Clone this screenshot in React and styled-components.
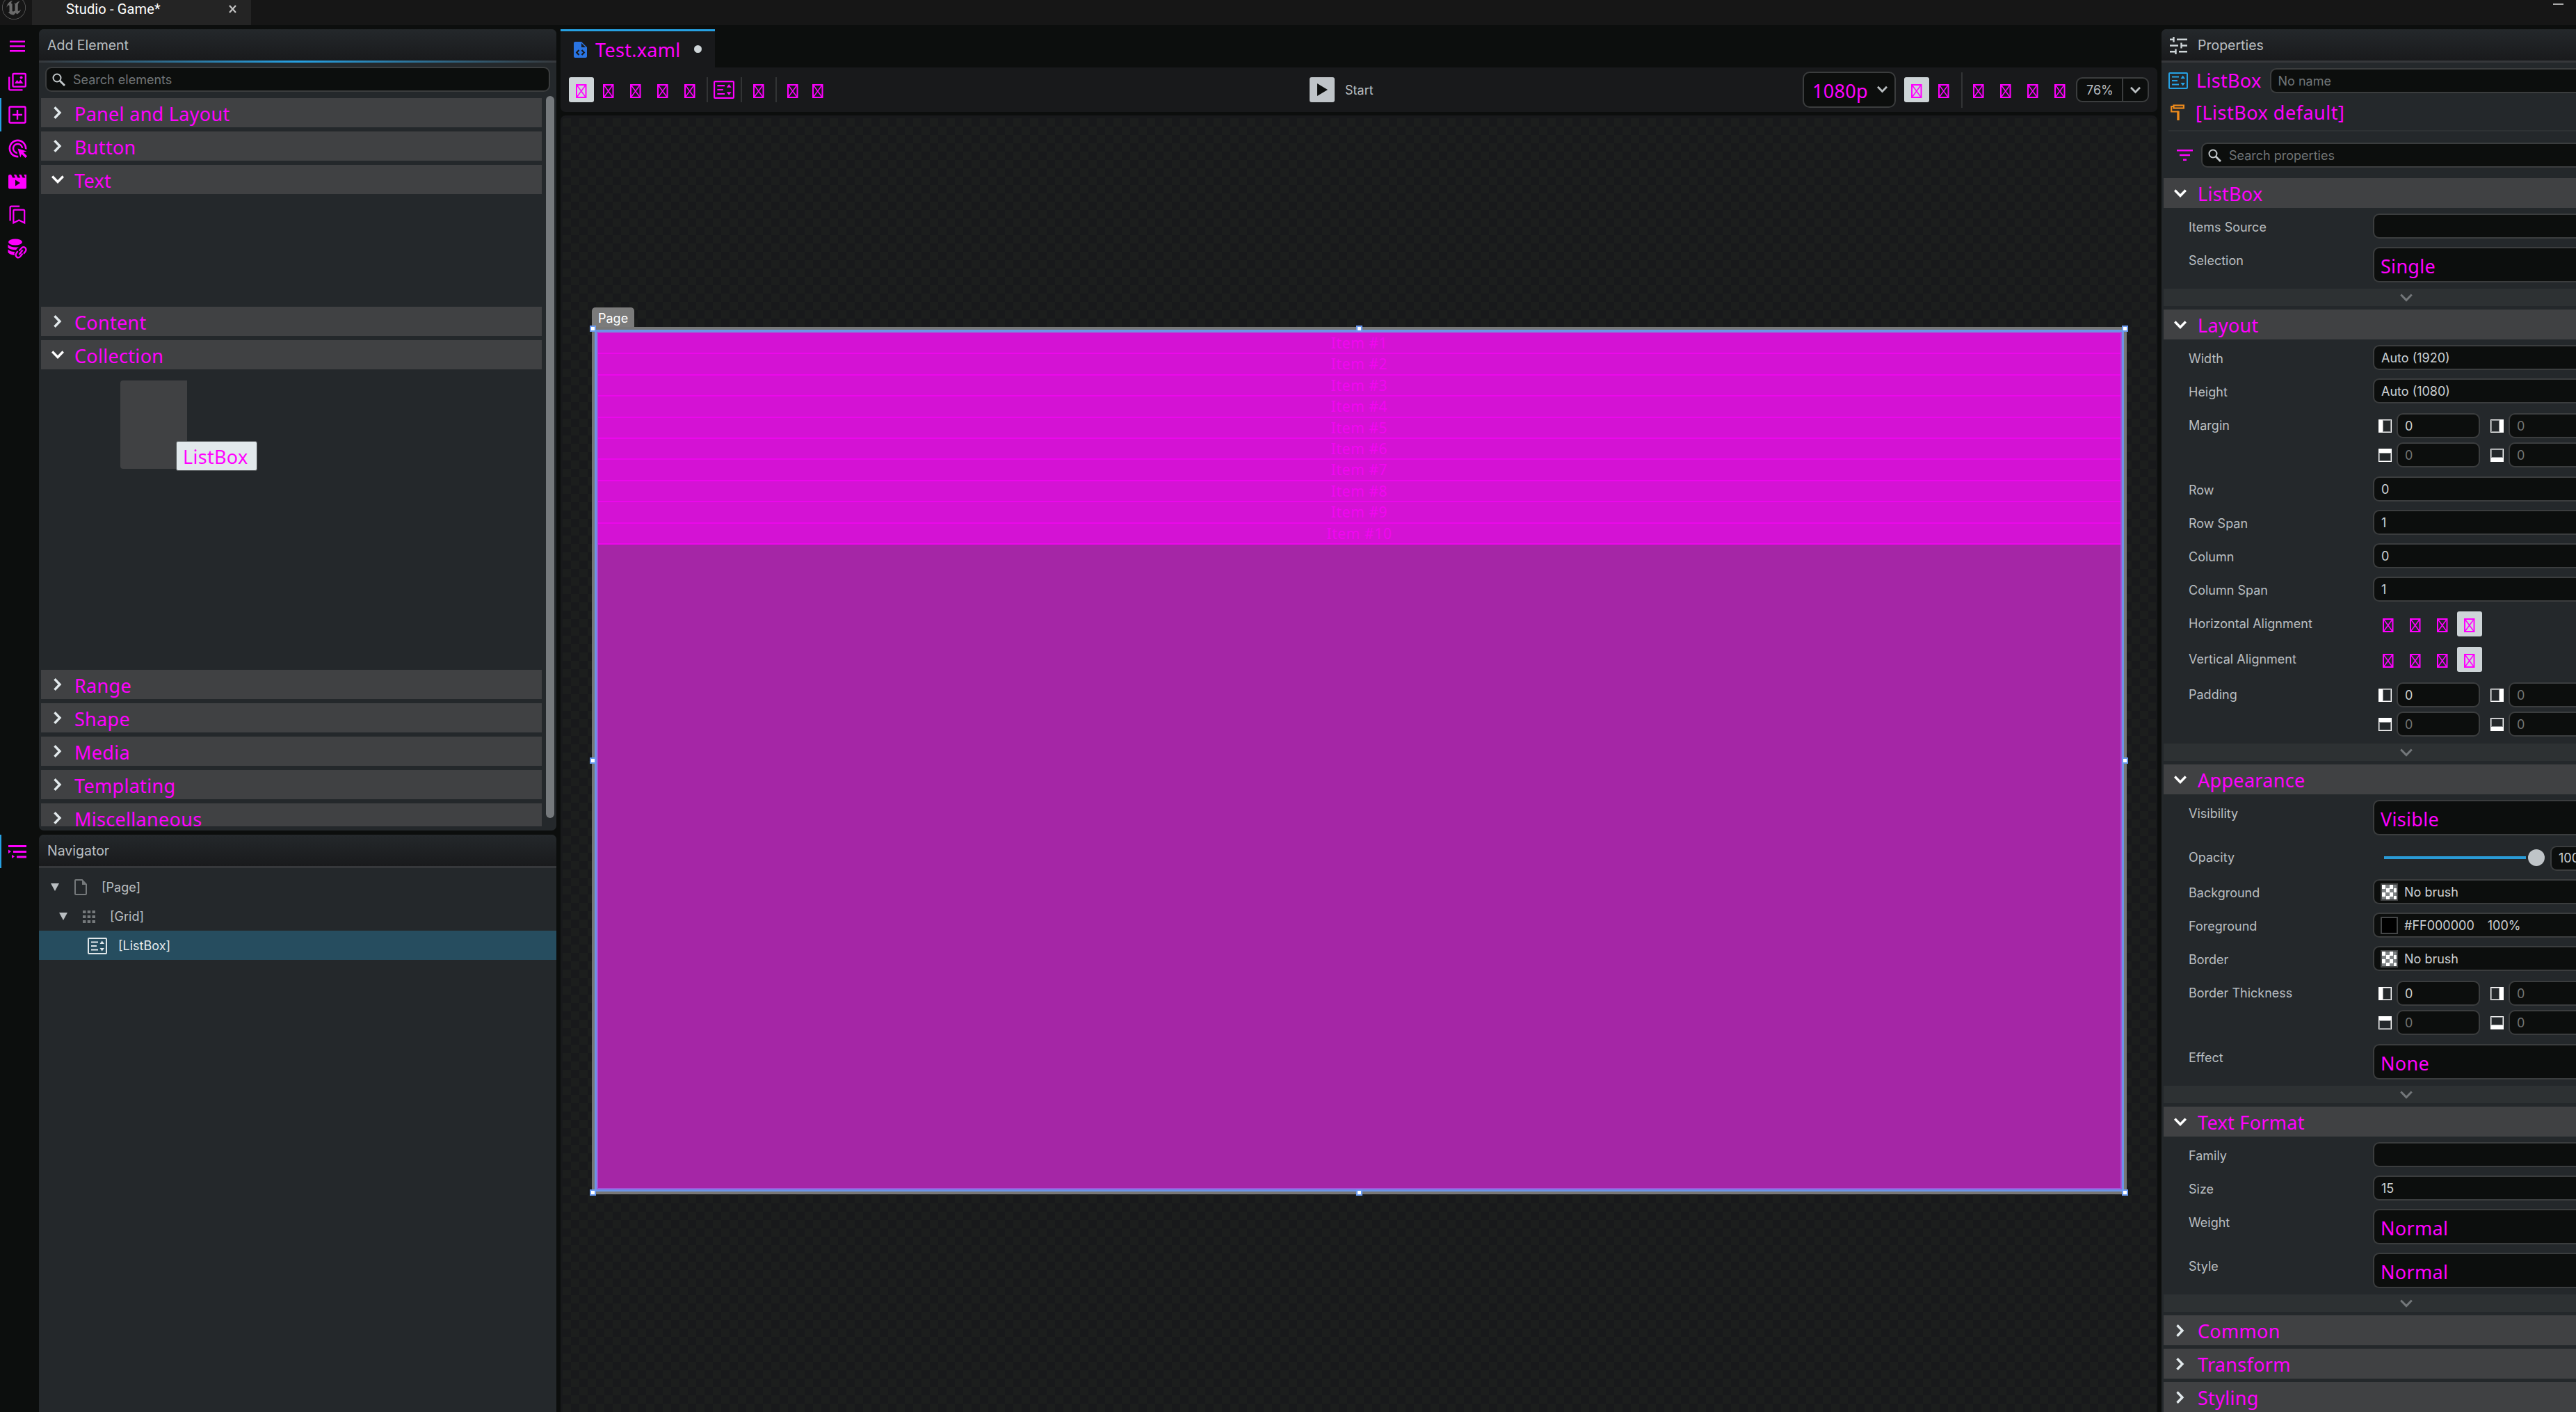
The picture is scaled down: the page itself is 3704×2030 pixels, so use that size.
import React from "react";
import styled, { createGlobalStyle, css } from "styled-components";
import { SiUnrealengine } from "react-icons/si";
import { MdAdsClick } from "react-icons/md";

const magenta = "#ff00ff";
const blue = "#26a1e3";

const GlobalStyle = createGlobalStyle`
  * {
    box-sizing: border-box;
  }
  body {
    margin: 0;
    background: #0c0e0d;
    overflow: hidden;
  }
`;

const Window = styled.div`
  width: 3704px;
  height: 2030px;
  display: flex;
  flex-direction: column;
  overflow: hidden;
  background: #0c0e0d;
  color: #b9bec1;
  font: 18px/24px Inter, sans-serif;
  white-space: nowrap;
`;

const TitleBar = styled.header`
  display: flex;
  height: 36px;
  background: #161616;
`;

const Logo = styled.div`
  width: 46px;
  padding-left: 3px;
  overflow: hidden;
  color: #6a6a6a;
  svg {
    display: block;
    margin-top: -6px;
  }
`;

const WindowTab = styled.div`
  display: flex;
  justify-content: space-between;
  width: 315px;
  padding: 1px 21px 0 49px;
  background: #242424;
  color: #fff;
  font: 20px/24px Roboto, sans-serif;
  letter-spacing: 0.15px;
`;

const CloseMark = styled.span`
  color: #c4c4c4;
  padding-top: 6px;
  svg {
    display: block;
  }
`;

const Minimize = styled.div`
  width: 15px;
  height: 2px;
  margin: 5px 18px 0 auto;
  background: #aaa;
`;

const Workspace = styled.div`
  display: flex;
  flex: 1;
  min-height: 0;
  padding-top: 6px;
`;

const Rail = styled.nav`
  display: flex;
  flex-direction: column;
  width: 56px;
  color: ${magenta};
`;

const RailItem = styled.div`
  display: flex;
  align-items: center;
  justify-content: center;
  height: 48px;
  margin-top: ${(p) => p.$gap || 0}px;
  padding-right: 9px;
  padding-left: 1px;
  border-left: 2px solid ${(p) => (p.$active ? blue : "transparent")};
`;

const LeftColumn = styled.div`
  display: flex;
  flex-direction: column;
  gap: 6px;
  width: 744px;
  margin-right: 6px;
`;

const Panel = styled.section`
  display: flex;
  flex-direction: column;
  height: ${(p) => (p.$height ? `${p.$height}px` : "auto")};
  flex: ${(p) => (p.$height ? "none" : 1)};
  min-height: 0;
  overflow: hidden;
  border-radius: ${(p) => p.$radius || "7px"};
  background: #24282b;
`;

const PanelHeader = styled.div`
  display: flex;
  flex: none;
  align-items: center;
  gap: 15px;
  height: 48px;
  padding: 1px 0 0 12px;
  border-bottom: 3px solid #36383b;
  background: linear-gradient(#24282b, #191a1c) padding-box;
  font-size: 19.5px;
  ${(p) =>
    p.$active &&
    css`
      border-image: linear-gradient(90deg, #36383b, ${blue}, #36383b) 1;
    `}
`;

const fieldLook = css`
  border: 2px solid #3b3d3e;
  background: #0c0e0d;
`;

const SearchBox = styled.div`
  ${fieldLook}
  display: flex;
  align-items: center;
  gap: 11px;
  height: 36px;
  margin: ${(p) => p.$margin || 0};
  padding: 1px 0 0 8px;
  border-radius: ${(p) => (p.$grow ? "9px 0 0 9px" : "9px")};
  border-right-width: ${(p) => (p.$grow ? 0 : "2px")};
  color: #717577;
  flex: ${(p) => (p.$grow ? 1 : "none")};
  svg {
    color: #c4c9cc;
  }
`;

const ElementList = styled.div`
  display: flex;
  flex: 1;
  min-height: 0;
  margin: 6px 3px 6px;
  gap: 6px;
`;

const Categories = styled.div`
  display: flex;
  flex-direction: column;
  gap: 6px;
  width: 720px;
  padding-top: 3px;
  overflow: hidden;
`;

const ScrollThumb = styled.div`
  width: 12px;
  height: 1038px;
  border-radius: 6px;
  background: #75797c;
`;

const bigText = css`
  color: ${magenta};
  font: 27px/36px "Noto Sans", sans-serif;
  letter-spacing: 0.3px;
`;

const SectionBar = styled.div`
  ${bigText}
  display: flex;
  flex: none;
  align-items: center;
  gap: ${(p) => p.$gap || 15}px;
  height: ${(p) => p.$height || 42}px;
  padding-left: 15px;
  background: #404143;
  svg {
    flex: none;
    color: ${(p) => (p.$open ? "#fff" : "#e2e9ec")};
  }
  span {
    padding-top: 3px;
  }
`;

const CategoryBody = styled.div`
  flex: none;
  height: ${(p) => p.$height}px;
  padding: 10px 0 0 114px;
`;

const ElementTile = styled.div`
  position: relative;
  width: 96px;
  height: 127px;
  border-radius: 4px 0 0 4px;
  background: #404143;
`;

const Tooltip = styled.div`
  ${bigText}
  position: absolute;
  left: 80px;
  top: 87px;
  height: 43px;
  width: 117px;
  padding: 4px 0 0 9px;
  border: 1px solid #54585a;
  border-radius: 3px;
  background: #e2e9ec;
`;

const Tree = styled.div`
  padding-top: 6px;
`;

const TreeRow = styled.div`
  display: flex;
  align-items: center;
  height: 42px;
  padding: 1px 0 0 ${(p) => p.$indent}px;
  color: ${(p) => (p.$selected ? "#e4eaed" : "#b9bec1")};
  background: ${(p) => (p.$selected ? "#264d5f" : "none")};
`;

const TreeIcon = styled.span`
  display: flex;
  justify-content: center;
  width: 30px;
  margin: 0 15px 0 16px;
  color: ${(p) => (p.$bright ? "#dfe6e9" : "#75797b")};
`;

const Editor = styled.main`
  display: flex;
  flex-direction: column;
  width: 2296px;
  margin-right: 6px;
`;

const FileTab = styled.div`
  ${bigText}
  display: flex;
  align-items: center;
  width: 222px;
  height: 55px;
  padding: 1px 0 0 19px;
  border-top: 3px solid ${blue};
  background: #18191b;
  gap: 12px;
`;

const ModifiedDot = styled.i`
  width: 11px;
  height: 11px;
  margin: -2px 0 0 7px;
  border-radius: 50%;
  background: #ced5d8;
`;

const Toolbar = styled.div`
  display: flex;
  align-items: center;
  height: 64px;
  padding: 0 12px;
  border-radius: 0 7px 7px 7px;
  background: #18191b;
`;

const ToolGroup = styled.div`
  display: flex;
  align-items: center;
  gap: 3px;
  flex: ${(p) => (p.$width ? `0 0 ${p.$width}px` : 1)};
  justify-content: ${(p) => p.$align || "flex-start"};
`;

const ToolButton = styled.span`
  display: flex;
  align-items: center;
  justify-content: center;
  width: 36px;
  height: 36px;
  margin-left: ${(p) => p.$shift || 0}px;
  padding-top: ${(p) => (p.$flat ? 0 : "4px")};
  border-radius: 3px;
  color: ${magenta};
  background: ${(p) => (p.$selected ? "#ced5d8" : "none")};
`;

const Separator = styled.i`
  width: 2px;
  height: ${(p) => p.$height || 36}px;
  margin: ${(p) => p.$margin || 0};
  background: #323435;
`;

const StartButton = styled.div`
  display: flex;
  align-items: center;
  justify-content: center;
  width: 36px;
  height: 36px;
  margin-right: 15px;
  border-radius: 3px;
  background: #bfc4c8;
`;

const StartLabel = styled.span`
  padding-top: 1px;
`;

const ResolutionBox = styled.div`
  ${fieldLook}
  ${bigText}
  display: flex;
  align-items: center;
  justify-content: space-between;
  width: 134px;
  height: 52px;
  margin-right: 9px;
  padding: 3px 10px 0 12px;
  border-radius: 10px;
  svg {
    margin-top: -4px;
    color: #b9bec1;
  }
`;

const ZoomBox = styled.div`
  ${fieldLook}
  display: flex;
  align-items: stretch;
  width: 105px;
  height: 36px;
  margin-left: 2px;
  border-radius: 9px;
  line-height: 33px;
`;

const ZoomValue = styled.span`
  width: 66px;
  padding-left: 13px;
  border-right: 2px solid #3b3d3e;
`;

const ZoomArrow = styled.span`
  display: flex;
  flex: 1;
  align-items: center;
  justify-content: center;
`;

const Canvas = styled.div`
  position: relative;
  flex: 1;
  margin-top: 5px;
  border: solid #18191b;
  border-width: 4px 2px 0 3px;
  border-radius: 7px 7px 0 0;
  background: conic-gradient(
      #18191b 25%,
      #1c1e1d 0 50%,
      #18191b 0 75%,
      #1c1e1d 0
    )
    0 0 / 24px 24px;
`;

const PageTag = styled.div`
  position: absolute;
  left: 42px;
  top: 272px;
  width: 61px;
  height: 28px;
  padding: 4px 0 0 9px;
  border-radius: 5px 5px 0 0;
  background: #7b7b7b;
  color: #fff;
`;

const Artboard = styled.div`
  position: absolute;
  left: 42px;
  top: 300px;
  width: 2207px;
  height: 1247px;
  border: 4px solid #777;
`;

const SelectionFrame = styled.div`
  height: 100%;
  border: 3px solid #6b95e6;
`;

const ListBoxView = styled.div`
  height: 100%;
  border: 2px solid #a255d8;
  background: #a526a6;
`;

const ListItem = styled.div`
  height: 30.4px;
  border-bottom: 2px solid #ec08ec;
  background: #d412d4;
  color: #f206f2;
  font: 21px/28px "Noto Sans", sans-serif;
  letter-spacing: 0.6px;
  text-align: center;
`;

const Handle = styled.i`
  position: absolute;
  left: ${(p) => p.$x}px;
  top: ${(p) => p.$y}px;
  width: 9px;
  height: 9px;
  border: 2px solid #6b9bf0;
  background: #fff;
`;

const Properties = styled.aside`
  display: flex;
  flex: 1;
  min-width: 0;
`;

const NameRow = styled.div`
  ${bigText}
  display: flex;
  flex: none;
  align-items: center;
  gap: 12px;
  height: 51px;
  padding-left: 10px;
`;

const TypeIcon = styled.span`
  display: flex;
  color: ${blue};
`;

const NameField = styled.div`
  ${fieldLook}
  flex: 1;
  height: 36px;
  padding-left: 10px;
  border-right: 0;
  border-radius: 9px 0 0 9px;
  color: #717577;
  font: 18px/33px Inter, sans-serif;
  letter-spacing: 0;
`;

const StyleRow = styled.div`
  ${bigText}
  display: flex;
  flex: none;
  align-items: center;
  gap: 16px;
  height: 48px;
  margin-left: 10px;
  padding: 0 0 5px 3px;
  border-bottom: 2px solid #2e3234;
  letter-spacing: 0.5px;
`;

const FilterRow = styled.div`
  display: flex;
  flex: none;
  align-items: center;
  gap: 12px;
  height: 36px;
  margin: 16px 0 15px;
  padding-left: 22px;
  color: ${magenta};
`;

const Section = styled.div`
  flex: none;
  margin: 0 0 5px 3px;
`;

const SectionRows = styled.div`
  display: flex;
  flex-direction: column;
  gap: 12px;
  padding: 8px 0 9px 36px;
`;

const MoreBar = styled.div`
  display: flex;
  align-items: center;
  height: 25px;
  padding-left: 340px;
  background: #2d3133;
  color: #73777a;
`;

const PropertyRow = styled.div`
  display: grid;
  grid-template-columns: 265px 1fr;
`;

const PropertyLabel = styled.label`
  height: 36px;
  padding-top: 8px;
`;

const Field = styled.div`
  ${fieldLook}
  display: flex;
  align-items: center;
  height: 36px;
  width: ${(p) => p.$width || "auto"};
  padding: 1px 0 0 10px;
  border-radius: ${(p) => (p.$width ? "9px" : "9px 0 0 9px")};
  border-right-width: ${(p) => (p.$width ? "2px" : 0)};
  color: ${(p) => (p.$dim ? "#717577" : "#ccd1d4")};
`;

const ComboField = styled.div`
  ${fieldLook}
  ${bigText}
  height: 51px;
  padding: 8px 0 0 9px;
  border-right: 0;
  border-radius: 9px 0 0 9px;
`;

const ThicknessGrid = styled.div`
  display: grid;
  grid-template-columns: 18px 120px 18px 120px;
  grid-template-rows: 36px 36px;
  align-items: center;
  gap: 6px 8px;
  padding: 2px 0 1px 8px;
  & > :nth-child(4n + 3) {
    margin-left: 7px;
  }
  & > :nth-child(4n) {
    margin-left: 7px;
  }
`;

const EdgeIcon = styled.i`
  width: 19px;
  height: 19px;
  border: 1px solid #fff;
  box-shadow: inset 0 0 0 1px #8e9193;
  border-${(p) => p.$edge}: 6px solid #fff;
`;

const AlignGroup = styled.div`
  display: flex;
  gap: 3px;
  height: 39px;
  padding: 2px 0 0 4px;
`;

const SliderRow = styled.div`
  display: flex;
  align-items: center;
  height: 39px;
  padding-left: 16px;
`;

const SliderTrack = styled.i`
  width: 204px;
  height: 4px;
  background: #2a9bd6;
`;

const SliderThumb = styled.i`
  width: 24px;
  height: 24px;
  margin: 0 8px 0 3px;
  border-radius: 50%;
  background: #bfc4c8;
`;

const SliderValue = styled(Field)`
  flex: 1;
  margin-top: 2px;
  overflow: hidden;
`;

const Swatch = styled.i`
  width: 25px;
  height: 25px;
  margin: -1px 9px 0 -1px;
  border: 2px solid #444647;
  background: ${(p) =>
    p.$color ||
    "conic-gradient(#808486 25%, #fff 0 50%, #808486 0 75%, #fff 0) 0 0 / 11px 11px"};
`;

const SwatchAlpha = styled.span`
  margin-left: 19px;
`;

// Box drawn for a glyph that the icon font does not have
const MissingGlyph = () => (
  <svg width="16" height="20" viewBox="0 0 16 20" fill="none" stroke="currentColor">
    <rect x="1" y="1" width="13.5" height="18" strokeWidth="2" />
    <path d="M1.5 1.5 14 18.5M14 1.5 1.5 18.5" strokeWidth="1.5" />
  </svg>
);

const Chevron = ({ dir, size = 18, width = 3.4 }) => (
  <svg width={size} height={size} viewBox="0 0 18 18" fill="none" stroke="currentColor" strokeWidth={width}>
    <path d={dir === "right" ? "M4.5 1.2 12 9l-7.5 7.8" : "M1.2 4.5 9 12.5l7.8-8"} />
  </svg>
);

const SearchIcon = () => (
  <svg width="19" height="19" viewBox="0 0 19 19" fill="none" stroke="currentColor" strokeWidth="2">
    <circle cx="7" cy="7" r="5.5" />
    <path d="m11 11 7 7" strokeWidth="2.8" />
  </svg>
);

const ListBoxIcon = ({ w = 28, h = 24 }) => (
  <svg
    width={w}
    height={h}
    viewBox="0 0 28 24"
    preserveAspectRatio="none"
    fill="none"
    stroke="currentColor"
    strokeWidth="2"
  >
    <rect x="1" y="1" width="26" height="22" rx="1" />
    <path d="M5 6.5h10M5 12h8M5 17.5h10" />
    <path d="m17.5 9 3.2-4.4L24 9zM17.5 15l3.2 4.4L24 15z" fill="currentColor" stroke="none" />
  </svg>
);

const MenuIcon = () => (
  <svg width="22" height="17" viewBox="0 0 22 17" fill="currentColor">
    <path d="M0 .5h22v2.6H0zM0 7.2h22v2.6H0zM0 13.9h22v2.6H0z" />
  </svg>
);

const ImagesIcon = () => (
  <svg width="26" height="27" viewBox="0 0 26 27" fill="none" stroke="currentColor" strokeWidth="2.3">
    <path d="M1.2 6.5V24q0 1.3 1.3 1.3h18" />
    <rect x="6.5" y="2" width="18.3" height="18.6" rx="1.2" />
    <path d="m9 16 3.5-5 2.5 3 2.3-3.5L21.5 16z" fill="currentColor" stroke="none" />
    <circle cx="18.6" cy="7.6" r="2" fill="currentColor" stroke="none" />
  </svg>
);

const AddBoxIcon = () => (
  <svg width="26" height="26" viewBox="0 0 26 26" fill="none" stroke="currentColor" strokeWidth="2.4">
    <rect x="1.5" y="1.5" width="23" height="23" rx="1.5" />
    <path d="M13 6v14M6 13h14" />
  </svg>
);

const ClapperIcon = () => (
  <svg width="26" height="21" viewBox="0 0 26 21" fill="currentColor" fillRule="evenodd">
    <path d="M2 0h2l2.3 4.5h3.8L7.8 0h3.4l2.3 4.5h3.8L15 0h3.4l2.3 4.5h3.7L22.2 0H26v18.6q0 2-2 2H2q-2 0-2-2V2q0-2 2-2zM10 7.5v9l7-4.5z" />
  </svg>
);

const BookmarksIcon = () => (
  <svg width="24" height="28" viewBox="0 0 24 28" fill="none" stroke="currentColor" strokeWidth="2.2">
    <path d="M1.6 22.5V3.2q0-1.6 1.6-1.6h12" />
    <path d="M6.4 25.5V8q0-1.4 1.4-1.4h13q1.4 0 1.4 1.4v17.5l-7.9-4z" />
  </svg>
);

const DataLinkIcon = () => (
  <svg width="28" height="29" viewBox="0 0 28 29" fill="currentColor">
    <ellipse cx="11" cy="5" rx="10" ry="4.5" />
    <path d="M.5 8.5q3.5 4 10.5 4 3 0 5-.6-2.5 2-4 4.3Q4 16.3 .5 13z" />
    <path d="M.5 15.5q3.5 3.5 9.7 3.5-1 2.5-.3 5Q3.5 23.5 .5 20z" />
    <g fill="none" stroke="currentColor" strokeWidth="2.3">
      <path d="m16.5 17.5 4-4.500q3-2 5 .5 1.8 2.3 0 5l-2.5 3.2" />
      <path d="m21.5 21.5-3.5 4.5q-2.5 2.5-5 .5-2.5-2.3-.5-5.5l2-3" />
      <path d="m16.5 23 5-6.5" />
    </g>
  </svg>
);

const OutlineIcon = () => (
  <svg width="26" height="19" viewBox="0 0 26 19" fill="currentColor">
    <path d="M0 0h26v3H0zM7 8h19v3H7zM12 15.5h14v3H12zM0 6.5l4 2.800-4 2.800zM5 13.700l4 2.700-4 2.600z" />
  </svg>
);

const TriangleIcon = () => (
  <svg width="12" height="11" viewBox="0 0 12 11" fill="currentColor">
    <path d="M0 0h12L6 11z" />
  </svg>
);

const PageIcon = () => (
  <svg width="18" height="23" viewBox="0 0 18 23" fill="none" stroke="currentColor" strokeWidth="2">
    <path d="M1 2q0-1 1-1h9l6 6.5V21q0 1-1 1H2q-1 0-1-1z" />
    <path d="M11 1v7h6z" fill="currentColor" stroke="none" />
  </svg>
);

const GridIcon = () => (
  <svg width="18" height="18" viewBox="0 0 18 18" fill="currentColor">
    {[0, 7, 14].map((y) => (
      <path key={y} d={`M0 ${y}h4.5v4H0zM6.7 ${y}h4.5v4H6.7zM13.5 ${y}h4.5v4h-4.5z`} />
    ))}
  </svg>
);

const XamlIcon = () => (
  <svg width="19" height="23" viewBox="0 0 19 23">
    <path d="M0 2q0-2 2-2h9l8 8v13q0 2-2 2H2q-2 0-2-2z" fill="#2a74e2" />
    <path d="M11 2v6h6z" fill="#18191b" />
    <path
      d="m7.5 12-3.3 3.5L7.5 19M11.5 12l3.3 3.5-3.3 3.5"
      fill="none"
      stroke="#18191b"
      strokeWidth="2.2"
    />
  </svg>
);

const SlidersIcon = () => (
  <svg width="25" height="25" viewBox="0 0 25 25" fill="none" stroke="#ced5d8" strokeWidth="2.4">
    <path d="M0 3.8h6M10 3.8h15M5.5 0v7.5M0 12.5h12M16 12.5h9M16.5 8.5v8M0 21.2h9M13 21.2h12M8.5 17.5V25" />
  </svg>
);

const StyleIcon = () => (
  <svg width="20" height="23" viewBox="0 0 20 23" fill="none" stroke="#ee8b1c" strokeWidth="2.2">
    <rect x="4.5" y="1.5" width="14.5" height="4" />
    <path d="M4.5 3H1.2v7.5h10" />
    <path d="M11 9.5V23" strokeWidth="3.4" />
  </svg>
);

const FilterIcon = () => (
  <svg width="23" height="16" viewBox="0 0 23 16" fill="currentColor">
    <path d="M0 0h23v2.5H0zM4 6.8h15v2.5H4zM9 13.5h5V16H9z" />
  </svg>
);

const Category = ({ name, open, height }) => (
  <>
    <SectionBar $open={open}>
      <Chevron dir={open ? "down" : "right"} />
      <span>{name}</span>
    </SectionBar>
    {open && (
      <CategoryBody $height={height}>
        {name === "Collection" && (
          <ElementTile>
            <Tooltip>ListBox</Tooltip>
          </ElementTile>
        )}
      </CategoryBody>
    )}
  </>
);

const Thickness = () => (
  <ThicknessGrid>
    {["left", "right", "top", "bottom"].map((edge) => (
      <React.Fragment key={edge}>
        <EdgeIcon $edge={edge} />
        <Field $width="120px" $dim={edge !== "left"}>
          0
        </Field>
      </React.Fragment>
    ))}
  </ThicknessGrid>
);

const Alignment = () => (
  <AlignGroup>
    {[0, 1, 2, 3].map((i) => (
      <ToolButton key={i} $selected={i === 3}>
        <MissingGlyph />
      </ToolButton>
    ))}
  </AlignGroup>
);

const Brush = ({ value, color, alpha }) => (
  <Field>
    <Swatch $color={color} />
    {value}
    {alpha && <SwatchAlpha>{alpha}</SwatchAlpha>}
  </Field>
);

const Opacity = () => (
  <SliderRow>
    <SliderTrack />
    <SliderThumb />
    <SliderValue>100</SliderValue>
  </SliderRow>
);

const text = (value) => <Field>{value}</Field>;
const combo = (value) => <ComboField>{value}</ComboField>;

const sections = [
  {
    name: "ListBox",
    rows: [
      ["Items Source", text("")],
      ["Selection", combo("Single")],
    ],
  },
  {
    name: "Layout",
    rows: [
      ["Width", text("Auto (1920)")],
      ["Height", text("Auto (1080)")],
      ["Margin", <Thickness />],
      ["Row", text("0")],
      ["Row Span", text("1")],
      ["Column", text("0")],
      ["Column Span", text("1")],
      ["Horizontal Alignment", <Alignment />],
      ["Vertical Alignment", <Alignment />],
      ["Padding", <Thickness />],
    ],
  },
  {
    name: "Appearance",
    rows: [
      ["Visibility", combo("Visible")],
      ["Opacity", <Opacity />],
      ["Background", <Brush value="No brush" />],
      ["Foreground", <Brush value="#FF000000" color="#000" alpha="100%" />],
      ["Border", <Brush value="No brush" />],
      ["Border Thickness", <Thickness />],
      ["Effect", combo("None")],
    ],
  },
  {
    name: "Text Format",
    rows: [
      ["Family", text("")],
      ["Size", text("15")],
      ["Weight", combo("Normal")],
      ["Style", combo("Normal")],
    ],
  },
  { name: "Common" },
  { name: "Transform" },
  { name: "Styling" },
];

const PropertySection = ({ name, rows }) => (
  <Section>
    <SectionBar $height={43} $gap={16} $open={!!rows}>
      <Chevron dir={rows ? "down" : "right"} />
      <span>{name}</span>
    </SectionBar>
    {rows && (
      <>
        <SectionRows>
          {rows.map(([label, control]) => (
            <PropertyRow key={label}>
              <PropertyLabel>{label}</PropertyLabel>
              {control}
            </PropertyRow>
          ))}
        </SectionRows>
        <MoreBar>
          <Chevron width={3} />
        </MoreBar>
      </>
    )}
  </Section>
);

const handles = [
  [39, 298],
  [1141, 298],
  [2242, 298],
  [39, 919],
  [2242, 919],
  [39, 1540],
  [1141, 1540],
  [2242, 1540],
];

const App = () => (
  <Window>
    <GlobalStyle />
    <TitleBar>
      <Logo>
        <SiUnrealengine size={34} />
      </Logo>
      <WindowTab>
        Studio - Game*
        <CloseMark>
          <svg width="11" height="12" viewBox="0 0 11 12" stroke="currentColor" strokeWidth="2.2">
            <path d="M1 1l9 10M10 1 1 11" />
          </svg>
        </CloseMark>
      </WindowTab>
      <Minimize />
    </TitleBar>
    <Workspace>
      <Rail>
        <RailItem>
          <MenuIcon />
        </RailItem>
        <RailItem $gap={3}>
          <ImagesIcon />
        </RailItem>
        <RailItem $active>
          <AddBoxIcon />
        </RailItem>
        <RailItem>
          <MdAdsClick size={31} />
        </RailItem>
        <RailItem>
          <ClapperIcon />
        </RailItem>
        <RailItem>
          <BookmarksIcon />
        </RailItem>
        <RailItem>
          <DataLinkIcon />
        </RailItem>
        <RailItem $active $gap={819}>
          <OutlineIcon />
        </RailItem>
      </Rail>

      <LeftColumn>
        <Panel $height={1152}>
          <PanelHeader $active>Add Element</PanelHeader>
          <SearchBox $margin="6px 9px 0">
            <SearchIcon />
            Search elements
          </SearchBox>
          <ElementList>
            <Categories>
              <Category name="Panel and Layout" />
              <Category name="Button" />
              <Category name="Text" open height={150} />
              <Category name="Content" />
              <Category name="Collection" open height={420} />
              <Category name="Range" />
              <Category name="Shape" />
              <Category name="Media" />
              <Category name="Templating" />
              <Category name="Miscellaneous" />
            </Categories>
            <ScrollThumb />
          </ElementList>
        </Panel>
        <Panel $radius="7px 7px 0 0">
          <PanelHeader>Navigator</PanelHeader>
          <Tree>
            <TreeRow $indent={17}>
              <TriangleIcon />
              <TreeIcon>
                <PageIcon />
              </TreeIcon>
              [Page]
            </TreeRow>
            <TreeRow $indent={29}>
              <TriangleIcon />
              <TreeIcon>
                <GridIcon />
              </TreeIcon>
              [Grid]
            </TreeRow>
            <TreeRow $indent={53} $selected>
              <TreeIcon $bright>
                <ListBoxIcon />
              </TreeIcon>
              [ListBox]
            </TreeRow>
          </Tree>
        </Panel>
      </LeftColumn>

      <Editor>
        <FileTab>
          <XamlIcon />
          Test.xaml
          <ModifiedDot />
        </FileTab>
        <Toolbar>
          <ToolGroup $width={1065}>
            {[0, 1, 2, 3, 4].map((i) => (
              <ToolButton key={i} $selected={i === 0}>
                <MissingGlyph />
              </ToolButton>
            ))}
            <Separator $margin="0 2px 0 3px" />
            <ToolButton $flat>
              <ListBoxIcon w={30} h={26} />
            </ToolButton>
            <Separator $margin="0 0 0 3px" />
            <ToolButton $shift={3}>
              <MissingGlyph />
            </ToolButton>
            <Separator $margin="0 0 0 3px" />
            <ToolButton $shift={2}>
              <MissingGlyph />
            </ToolButton>
            <ToolButton $shift={-3}>
              <MissingGlyph />
            </ToolButton>
          </ToolGroup>
          <StartButton>
            <svg width="15" height="18" viewBox="0 0 15 18">
              <path d="M0 0v18l15-9z" fill="#0c0e0d" />
            </svg>
          </StartButton>
          <StartLabel>Start</StartLabel>
          <ToolGroup $align="flex-end">
            <ResolutionBox>
              1080p
              <Chevron size={15} />
            </ResolutionBox>
            <ToolButton $selected>
              <MissingGlyph />
            </ToolButton>
            <ToolButton>
              <MissingGlyph />
            </ToolButton>
            <Separator $height={51} $margin="0 2px 0 4px" />
            {[0, 1, 2, 3].map((i) => (
              <ToolButton key={i}>
                <MissingGlyph />
              </ToolButton>
            ))}
            <ZoomBox>
              <ZoomValue>76%</ZoomValue>
              <ZoomArrow>
                <Chevron size={15} />
              </ZoomArrow>
            </ZoomBox>
          </ToolGroup>
        </Toolbar>
        <Canvas>
          <PageTag>Page</PageTag>
          <Artboard>
            <SelectionFrame>
              <ListBoxView>
                {Array.from({ length: 10 }, (_, i) => (
                  <ListItem key={i}>Item #{i + 1}</ListItem>
                ))}
              </ListBoxView>
            </SelectionFrame>
          </Artboard>
          {handles.map(([x, y]) => (
            <Handle key={`${x}-${y}`} $x={x} $y={y} />
          ))}
        </Canvas>
      </Editor>

      <Properties>
        <Panel $radius="7px 0 0 0">
          <PanelHeader>
            <SlidersIcon />
            Properties
          </PanelHeader>
          <NameRow>
            <TypeIcon>
              <ListBoxIcon />
            </TypeIcon>
            ListBox
            <NameField>No name</NameField>
          </NameRow>
          <StyleRow>
            <StyleIcon />
            [ListBox default]
          </StyleRow>
          <FilterRow>
            <FilterIcon />
            <SearchBox $grow>
              <SearchIcon />
              Search properties
            </SearchBox>
          </FilterRow>
          {sections.map((section) => (
            <PropertySection key={section.name} {...section} />
          ))}
        </Panel>
      </Properties>
    </Workspace>
  </Window>
);

export default App;
